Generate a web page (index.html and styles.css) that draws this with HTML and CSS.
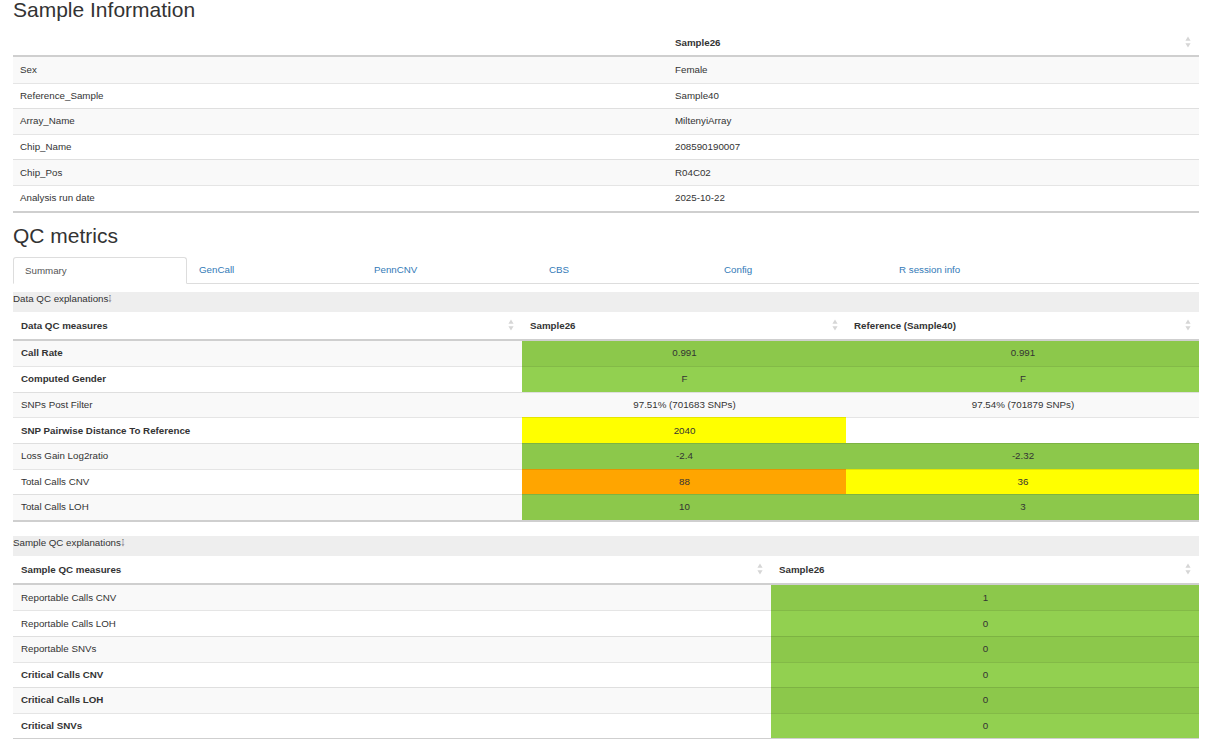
FILE: index.html
```html
<!DOCTYPE html>
<html lang="en">
<head>
<meta charset="utf-8">
<title>Sample QC report</title>
<link rel="stylesheet" href="styles.css">
</head>
<body>
<div class="page">
  <h2 class="title">Sample Information</h2>
  <table class="dt info">
    <colgroup><col class="c-info1"><col></colgroup>
    <thead>
      <tr>
        <th></th>
        <th><div class="th-in"><span>Sample26</span><svg class="sort" viewBox="0 0 6 12" width="6" height="12"><path d="M3 0.5L5.6 4.8H0.4Z M3 11.5L5.6 7.2H0.4Z"/></svg></div></th>
      </tr>
    </thead>
    <tbody>
      <tr><td>Sex</td><td>Female</td></tr>
      <tr><td>Reference_Sample</td><td>Sample40</td></tr>
      <tr><td>Array_Name</td><td>MiltenyiArray</td></tr>
      <tr><td>Chip_Name</td><td>208590190007</td></tr>
      <tr><td>Chip_Pos</td><td>R04C02</td></tr>
      <tr><td>Analysis run date</td><td>2025-10-22</td></tr>
    </tbody>
  </table>

  <h2 class="title qc-title">QC metrics</h2>
  <ul class="tabs">
    <li class="tab active"><a>Summary</a></li>
    <li class="tab"><a>GenCall</a></li>
    <li class="tab"><a>PennCNV</a></li>
    <li class="tab"><a>CBS</a></li>
    <li class="tab"><a>Config</a></li>
    <li class="tab"><a>R session info</a></li>
  </ul>

  <div class="explain">Data QC explanations<span class="arr">⇩</span></div>
  <table class="dt qc">
    <colgroup><col class="c-d1"><col class="c-d2"><col></colgroup>
    <thead>
      <tr>
        <th><div class="th-in th-left"><span>Data QC measures</span><svg class="sort" viewBox="0 0 6 12" width="6" height="12"><path d="M3 0.5L5.6 4.8H0.4Z M3 11.5L5.6 7.2H0.4Z"/></svg></div></th>
        <th><div class="th-in"><span>Sample26</span><svg class="sort" viewBox="0 0 6 12" width="6" height="12"><path d="M3 0.5L5.6 4.8H0.4Z M3 11.5L5.6 7.2H0.4Z"/></svg></div></th>
        <th><div class="th-in"><span>Reference (Sample40)</span><svg class="sort" viewBox="0 0 6 12" width="6" height="12"><path d="M3 0.5L5.6 4.8H0.4Z M3 11.5L5.6 7.2H0.4Z"/></svg></div></th>
      </tr>
    </thead>
    <tbody>
      <tr><td class="b">Call Rate</td><td class="v g">0.991</td><td class="v g">0.991</td></tr>
      <tr><td class="b">Computed Gender</td><td class="v g">F</td><td class="v g">F</td></tr>
      <tr><td>SNPs Post Filter</td><td class="v">97.51% (701683 SNPs)</td><td class="v">97.54% (701879 SNPs)</td></tr>
      <tr><td class="b">SNP Pairwise Distance To Reference</td><td class="v y">2040</td><td class="v"></td></tr>
      <tr><td>Loss Gain Log2ratio</td><td class="v g">-2.4</td><td class="v g">-2.32</td></tr>
      <tr><td>Total Calls CNV</td><td class="v o">88</td><td class="v y">36</td></tr>
      <tr><td>Total Calls LOH</td><td class="v g">10</td><td class="v g">3</td></tr>
    </tbody>
  </table>

  <div class="explain explain-2">Sample QC explanations<span class="arr">⇩</span></div>
  <table class="dt qc sample">
    <colgroup><col class="c-s1"><col></colgroup>
    <thead>
      <tr>
        <th><div class="th-in th-left"><span>Sample QC measures</span><svg class="sort" viewBox="0 0 6 12" width="6" height="12"><path d="M3 0.5L5.6 4.8H0.4Z M3 11.5L5.6 7.2H0.4Z"/></svg></div></th>
        <th><div class="th-in"><span>Sample26</span><svg class="sort" viewBox="0 0 6 12" width="6" height="12"><path d="M3 0.5L5.6 4.8H0.4Z M3 11.5L5.6 7.2H0.4Z"/></svg></div></th>
      </tr>
    </thead>
    <tbody>
      <tr><td>Reportable Calls CNV</td><td class="v g">1</td></tr>
      <tr><td>Reportable Calls LOH</td><td class="v g">0</td></tr>
      <tr><td>Reportable SNVs</td><td class="v g">0</td></tr>
      <tr><td class="b">Critical Calls CNV</td><td class="v g">0</td></tr>
      <tr><td class="b">Critical Calls LOH</td><td class="v g">0</td></tr>
      <tr><td class="b">Critical SNVs</td><td class="v g">0</td></tr>
    </tbody>
  </table>
</div>
</body>
</html>
```
FILE: styles.css
```css
html, body {
  margin: 0;
  padding: 0;
  background: #fff;
}

body {
  font-family: "Liberation Sans", Arial, Helvetica, sans-serif;
  font-size: 9.75px;
  color: #333;
}

.page {
  padding: 0 23px 0 13px;
}

.title {
  font-size: 21px;
  font-weight: 400;
  line-height: 20px;
  margin: 0 0 9px 0;
  color: #333;
}

.qc-title {
  margin-top: 13px;
  margin-bottom: 11px;
}

/* tables */
.dt {
  width: 100%;
  table-layout: fixed;
  border-collapse: separate;
  border-spacing: 0;
  border-bottom: 2px solid #cfcfcf;
}

.c-info1 { width: 655px; }
.c-d1 { width: 509px; }
.c-d2 { width: 324px; }
.c-s1 { width: 758px; }

.dt th {
  height: 26px;
  padding: 0 8px 0 7px;
  text-align: left;
  font-weight: 700;
  border-bottom: 2px solid #cfcfcf;
  vertical-align: middle;
}

.qc th {
  height: 27px;
  padding-left: 8px;
}

.th-in {
  display: flex;
  align-items: center;
  justify-content: space-between;
}

.sort {
  display: block;
  fill: #d6d6d6;
}

.dt tbody tr {
  height: 25.6px;
}

.dt td {
  height: 24.6px;
  box-sizing: border-box;
  padding: 0 7px;
  line-height: 14px;
  border-top: 1px solid rgba(0, 0, 0, 0.1);
  vertical-align: middle;
  white-space: nowrap;
}

.qc td {
  padding-left: 8px;
}

.dt tbody tr:first-child td {
  border-top: none;
}

.dt tbody tr:nth-child(odd) td {
  background: #f9f9f9;
}

.dt td.b {
  font-weight: 700;
}

.dt td.v {
  text-align: center;
}

.dt td.g,
.dt tbody tr:nth-child(even) td.g {
  background: #92d050;
}

.dt tbody tr:nth-child(odd) td.g {
  background: #8cc84b;
}

.dt td.y {
  background: #ffff00;
}

.dt td.o {
  background: #ffa500;
}

/* tabs */
.tabs {
  list-style: none;
  margin: 0 0 8px 0;
  padding: 0;
  display: flex;
  border-bottom: 1px solid #ddd;
}

.tab {
  width: 175px;
  height: 26px;
  box-sizing: border-box;
  padding-left: 12px;
  display: flex;
  align-items: center;
}

.tab a {
  color: #337ab7;
  text-decoration: none;
}

.tab.active {
  width: 174px;
  height: 27px;
  margin-bottom: -1px;
  padding-left: 11px;
  background: #fff;
  border: 1px solid #ddd;
  border-bottom-color: transparent;
  border-radius: 3px 3px 0 0;
}

.tab.active a {
  color: #555;
}

/* explanation bars */
.explain {
  background: #eee;
  height: 20px;
  line-height: 14px;
  box-sizing: border-box;
}

.explain-2 {
  margin-top: 14px;
}

.arr {
  font-family: "DejaVu Sans", sans-serif;
  font-size: 9.75px;
  display: inline-block;
  transform: scaleX(0.45);
  transform-origin: left center;
  width: 5px;
}
```
